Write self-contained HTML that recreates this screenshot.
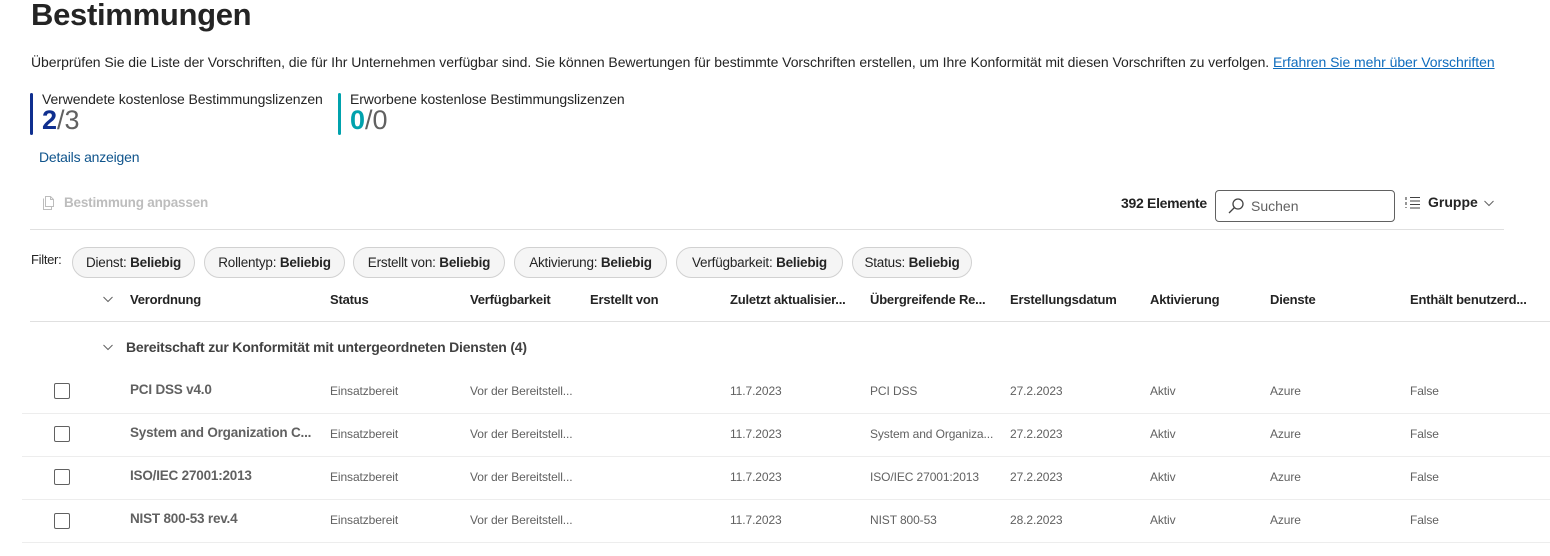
<!DOCTYPE html>
<html><head><meta charset="utf-8"><style>
*{margin:0;padding:0;box-sizing:border-box}
body{width:1550px;height:556px;background:#fff;font-family:"Liberation Sans",sans-serif;color:#242424;position:relative;overflow:hidden}
.a{position:absolute;white-space:nowrap}
h1{position:absolute;left:31px;top:-3px;font-size:31px;font-weight:600;color:#242424;letter-spacing:-0.3px}
.desc{left:31px;top:54px;font-size:14px;letter-spacing:-0.05px}
.desc a{color:#0f6cbd;text-decoration:underline}
.bar{position:absolute;width:3px;height:42px;border-radius:2px}
.lbl{font-size:14px;letter-spacing:-0.1px;color:#242424}
.num{font-size:27px;color:#616161}
.num b{font-weight:700}
.chip{position:absolute;top:247px;height:31px;border:1px solid #d1d1d1;background:#f5f5f5;border-radius:16px;font-size:13.5px;line-height:29px;text-align:center;letter-spacing:-0.2px;color:#242424}
.chip b{font-weight:700}
.h{top:292px;font-size:13px;font-weight:700;letter-spacing:-0.2px}
.line{position:absolute;height:1px;background:#e0e0e0}
.cb{position:absolute;left:54px;width:16px;height:16px;border:1px solid #616161;border-radius:2px}
.nm{font-size:13.5px;font-weight:700;color:#616161;letter-spacing:-0.2px}
.c{font-size:12px;color:#616161;letter-spacing:-0.1px}
</style></head><body>
<h1>Bestimmungen</h1>
<div class="a desc">Überprüfen Sie die Liste der Vorschriften, die für Ihr Unternehmen verfügbar sind. Sie können Bewertungen für bestimmte Vorschriften erstellen, um Ihre Konformität mit diesen Vorschriften zu verfolgen. <a>Erfahren Sie mehr über Vorschriften</a></div>

<div class="bar" style="left:30px;top:93px;background:#0f2f8f"></div>
<div class="a lbl" style="left:42px;top:91px">Verwendete kostenlose Bestimmungslizenzen</div>
<div class="a num" style="left:42px;top:105px"><b style="color:#0f2f8f">2</b>/3</div>
<div class="bar" style="left:338px;top:93px;background:#00a2ad"></div>
<div class="a lbl" style="left:350px;top:91px">Erworbene kostenlose Bestimmungslizenzen</div>
<div class="a num" style="left:350px;top:105px"><b style="color:#00a2ad">0</b>/0</div>
<div class="a" style="left:39px;top:149px;font-size:14px;color:#0f548c;letter-spacing:-0.2px">Details anzeigen</div>

<svg class="a" style="left:40px;top:195px" width="16" height="16" viewBox="0 0 16 16" fill="none" stroke="#bdbdbd" stroke-width="1"><path d="M3.5 3.5v11h8v-3"/><path d="M5.5 1.5h5l3 3v7h-8z"/><path d="M10.5 1.5v3h3"/></svg>
<div class="a" style="left:64px;top:195px;font-size:13.5px;font-weight:700;color:#bdbdbd;letter-spacing:-0.2px">Bestimmung anpassen</div>

<div class="a" style="left:1121px;top:195px;font-size:14px;font-weight:700;letter-spacing:-0.3px">392 Elemente</div>
<div class="a" style="left:1215px;top:190px;width:180px;height:32px;border:1px solid #616161;border-radius:4px"></div>
<svg class="a" style="left:1227px;top:197px" width="18" height="18" viewBox="0 0 18 18" fill="none" stroke="#424242" stroke-width="1.3"><circle cx="11" cy="7" r="5"/><path d="M7.5 10.5L2 16"/></svg>
<div class="a" style="left:1251px;top:198px;font-size:14px;color:#616161">Suchen</div>
<svg class="a" style="left:1405px;top:195px" width="16" height="16" viewBox="0 0 16 16" fill="none" stroke="#424242" stroke-width="1.1"><path d="M1 2v3M1 7v3M1 12v1M5 2.5h10M5 6h10M5 9.5h10M5 13h10"/></svg>
<div class="a" style="left:1428px;top:194px;font-size:14px;font-weight:700">Gruppe</div>
<svg class="a" style="left:1483px;top:198px" width="12" height="10" viewBox="0 0 12 10" fill="none" stroke="#616161" stroke-width="1"><path d="M1.5 3l4.5 4.5L10.5 3"/></svg>
<div class="line" style="left:30px;top:229px;width:1474px"></div>

<div class="a" style="left:31px;top:252px;font-size:13px;letter-spacing:-0.3px">Filter:</div>
<div class="chip" style="left:72px;width:123px">Dienst: <b>Beliebig</b></div>
<div class="chip" style="left:204px;width:141px">Rollentyp: <b>Beliebig</b></div>
<div class="chip" style="left:353px;width:152px">Erstellt von: <b>Beliebig</b></div>
<div class="chip" style="left:514px;width:153px">Aktivierung: <b>Beliebig</b></div>
<div class="chip" style="left:676px;width:167px">Verfügbarkeit: <b>Beliebig</b></div>
<div class="chip" style="left:852px;width:120px">Status: <b>Beliebig</b></div>

<svg class="a" style="left:102px;top:294px" width="12" height="10" viewBox="0 0 12 10" fill="none" stroke="#616161" stroke-width="1"><path d="M1.5 3l4.5 4.5L10.5 3"/></svg>
<div class="a h" style="left:130px">Verordnung</div>
<div class="a h" style="left:330px">Status</div>
<div class="a h" style="left:470px">Verfügbarkeit</div>
<div class="a h" style="left:590px">Erstellt von</div>
<div class="a h" style="left:730px">Zuletzt aktualisier...</div>
<div class="a h" style="left:870px">Übergreifende Re...</div>
<div class="a h" style="left:1010px">Erstellungsdatum</div>
<div class="a h" style="left:1150px">Aktivierung</div>
<div class="a h" style="left:1270px">Dienste</div>
<div class="a h" style="left:1410px">Enthält benutzerd...</div>
<div class="line" style="left:30px;top:321px;width:1520px"></div>

<svg class="a" style="left:102px;top:342px" width="12" height="10" viewBox="0 0 12 10" fill="none" stroke="#616161" stroke-width="1"><path d="M1.5 3l4.5 4.5L10.5 3"/></svg>
<div class="a" style="left:126px;top:339px;font-size:14px;font-weight:700;letter-spacing:-0.2px;color:#424242">Bereitschaft zur Konformität mit untergeordneten Diensten (4)</div>

<div class="cb" style="top:383px"></div>
<div class="a nm" style="left:130px;top:382px">PCI DSS v4.0</div>
<div class="a c" style="left:330px;top:384px">Einsatzbereit</div><div class="a c" style="left:470px;top:384px">Vor der Bereitstell...</div><div class="a c" style="left:730px;top:384px">11.7.2023</div><div class="a c" style="left:870px;top:384px">PCI DSS</div><div class="a c" style="left:1010px;top:384px">27.2.2023</div><div class="a c" style="left:1150px;top:384px">Aktiv</div><div class="a c" style="left:1270px;top:384px">Azure</div><div class="a c" style="left:1410px;top:384px">False</div>
<div class="line" style="left:22px;top:413px;width:1528px;background:#ededed"></div>

<div class="cb" style="top:426px"></div>
<div class="a nm" style="left:130px;top:425px">System and Organization C...</div>
<div class="a c" style="left:330px;top:427px">Einsatzbereit</div><div class="a c" style="left:470px;top:427px">Vor der Bereitstell...</div><div class="a c" style="left:730px;top:427px">11.7.2023</div><div class="a c" style="left:870px;top:427px">System and Organiza...</div><div class="a c" style="left:1010px;top:427px">27.2.2023</div><div class="a c" style="left:1150px;top:427px">Aktiv</div><div class="a c" style="left:1270px;top:427px">Azure</div><div class="a c" style="left:1410px;top:427px">False</div>
<div class="line" style="left:22px;top:456px;width:1528px;background:#ededed"></div>

<div class="cb" style="top:469px"></div>
<div class="a nm" style="left:130px;top:468px">ISO/IEC 27001:2013</div>
<div class="a c" style="left:330px;top:470px">Einsatzbereit</div><div class="a c" style="left:470px;top:470px">Vor der Bereitstell...</div><div class="a c" style="left:730px;top:470px">11.7.2023</div><div class="a c" style="left:870px;top:470px">ISO/IEC 27001:2013</div><div class="a c" style="left:1010px;top:470px">27.2.2023</div><div class="a c" style="left:1150px;top:470px">Aktiv</div><div class="a c" style="left:1270px;top:470px">Azure</div><div class="a c" style="left:1410px;top:470px">False</div>
<div class="line" style="left:22px;top:499px;width:1528px;background:#ededed"></div>

<div class="cb" style="top:513px"></div>
<div class="a nm" style="left:130px;top:511px">NIST 800-53 rev.4</div>
<div class="a c" style="left:330px;top:513px">Einsatzbereit</div><div class="a c" style="left:470px;top:513px">Vor der Bereitstell...</div><div class="a c" style="left:730px;top:513px">11.7.2023</div><div class="a c" style="left:870px;top:513px">NIST 800-53</div><div class="a c" style="left:1010px;top:513px">28.2.2023</div><div class="a c" style="left:1150px;top:513px">Aktiv</div><div class="a c" style="left:1270px;top:513px">Azure</div><div class="a c" style="left:1410px;top:513px">False</div>
<div class="line" style="left:22px;top:542px;width:1528px;background:#ededed"></div>
</body></html>
